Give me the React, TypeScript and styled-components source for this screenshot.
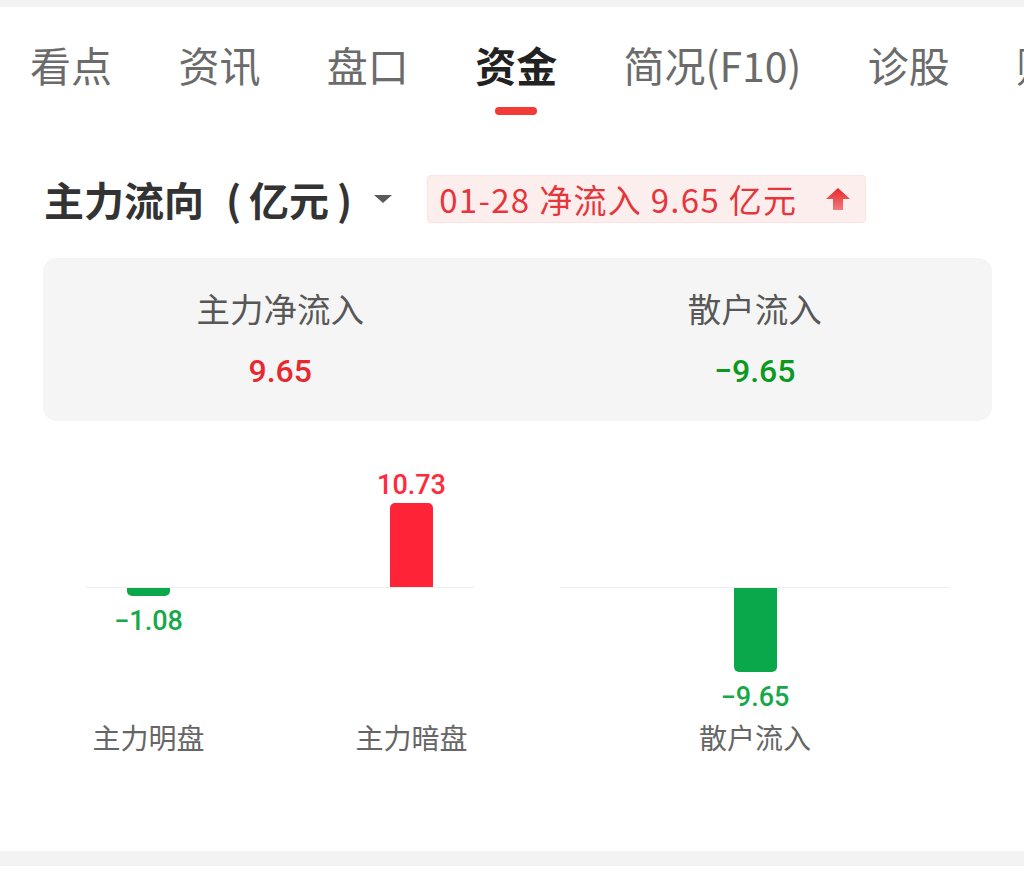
import React from "react";
import styled, { createGlobalStyle } from "styled-components";

const GlobalStyle = createGlobalStyle`
  html, body { margin: 0; padding: 0; background: #ffffff; }
  body {
    font-family: "Noto Sans CJK SC", "Noto Sans", sans-serif;
    width: 1024px;
    height: 875px;
    overflow: hidden;
  }
  * { box-sizing: border-box; }
`;

const Page = styled.div`
  width: 1024px;
  height: 875px;
  display: flex;
  flex-direction: column;
  background: #ffffff;
  overflow: hidden;
`;

const GrayStrip = styled.div<{ $h: number }>`
  height: ${(p) => p.$h}px;
  flex: 0 0 auto;
  background: #f3f3f3;
`;

const BottomGap = styled.div`
  height: 9px;
  flex: 0 0 auto;
`;

const TabBar = styled.nav`
  display: flex;
  gap: 66.4px;
  padding: 32px 0 0 30px;
  white-space: nowrap;
  overflow: hidden;
`;

const Tab = styled.div`
  display: flex;
  flex-direction: column;
  align-items: center;
  flex: 0 0 auto;
`;

const TabLabel = styled.span<{ $active?: boolean }>`
  font-size: 41px;
  line-height: 50px;
  color: ${(p) => (p.$active ? "#222222" : "#6b6b6b")};
  font-weight: ${(p) => (p.$active ? 700 : 400)};
`;

const Indicator = styled.div<{ $active?: boolean }>`
  margin-top: 18px;
  width: 42px;
  height: 8px;
  border-radius: 4px;
  background: ${(p) => (p.$active ? "#f23a36" : "transparent")};
`;

const TitleRow = styled.div`
  display: flex;
  align-items: center;
  height: 48px;
  margin-top: 60px;
  padding-left: 44px;
`;

const Title = styled.h2`
  margin: 0;
  font-size: 40px;
  line-height: 48px;
  font-weight: 700;
  color: #333333;
  display: flex;
`;

const TitleUnit = styled.span`
  margin-left: 22px;
`;

const Caret = styled.span`
  width: 0;
  height: 0;
  margin-left: 22px;
  border-left: 9px solid transparent;
  border-right: 9px solid transparent;
  border-top: 8px solid #5a5a5a;
`;

const Badge = styled.div`
  margin-left: 35px;
  height: 48px;
  width: 439px;
  display: flex;
  align-items: center;
  justify-content: space-between;
  padding: 0 15px 0 11px;
  background: #fdeeee;
  border: 1px solid #fbe2e3;
  border-radius: 4px;
  color: #e6363b;
  font-size: 33px;
  letter-spacing: 1.3px;
  line-height: 48px;
  white-space: nowrap;
`;

const SummaryCard = styled.section`
  margin: 35px 32px 0 43px;
  height: 163px;
  background: #f5f5f5;
  border-radius: 14px;
  display: grid;
  grid-template-columns: 1fr 1fr;
  padding: 30px 0 0;
`;

const SummaryCell = styled.div`
  display: flex;
  flex-direction: column;
  align-items: center;
`;

const SummaryLabel = styled.div`
  font-size: 33.5px;
  line-height: 40px;
  color: #575757;
`;

const SummaryValue = styled.div<{ $tone: "up" | "down" }>`
  margin-top: 23px;
  font-family: "Roboto", "Noto Sans", sans-serif;
  font-weight: 500;
  font-size: 32px;
  line-height: 40px;
  color: ${(p) => (p.$tone === "up" ? "#e8282f" : "#0b9a1e")};
`;

const Chart = styled.div`
  display: flex;
  gap: 85px;
  margin-top: 40px;
  padding-left: 85px;
`;

const Group = styled.div<{ $cols: number }>`
  width: 390px;
  display: grid;
  grid-template-columns: ${(p) => (p.$cols > 1 ? `repeat(${p.$cols}, 127px)` : "1fr")};
  grid-template-rows: 126px 1px 128px auto;
  justify-content: space-between;
`;

const Axis = styled.div`
  grid-row: 2;
  grid-column: 1 / -1;
  background: #eeeeee;
`;

const UpZone = styled.div<{ $col: number }>`
  grid-row: 1;
  grid-column: ${(p) => p.$col};
  display: flex;
  flex-direction: column;
  justify-content: flex-end;
  align-items: center;
`;

const DownZone = styled.div<{ $col: number }>`
  grid-row: 3;
  grid-column: ${(p) => p.$col};
  display: flex;
  flex-direction: column;
  justify-content: flex-start;
  align-items: center;
`;

const Bar = styled.div<{ $tone: "up" | "down" }>`
  width: 43px;
  background: ${(p) => (p.$tone === "up" ? "#ff2337" : "#0aa84a")};
  border-radius: ${(p) => (p.$tone === "up" ? "5px 5px 0 0" : "0 0 5px 5px")};
`;

const BarValue = styled.div<{ $tone: "up" | "down" }>`
  font-family: "Roboto", "Noto Sans", sans-serif;
  font-weight: 500;
  font-size: 27px;
  line-height: 28px;
  color: ${(p) => (p.$tone === "up" ? "#ff2a3b" : "#17a84a")};
  margin: ${(p) => (p.$tone === "up" ? "0 0 4px" : "11px 0 0")};
`;

const Category = styled.div<{ $col: number }>`
  grid-row: 4;
  grid-column: ${(p) => p.$col};
  margin-top: 4px;
  text-align: center;
  font-size: 28px;
  line-height: 34px;
  color: #666666;
  white-space: nowrap;
`;

const Spacer = styled.div`
  flex: 1 1 auto;
`;

const UpArrow = () => (
  <svg width="24" height="22" viewBox="0 0 24 22">
    <defs>
      <linearGradient id="ag" x1="0" y1="0" x2="0" y2="1">
        <stop offset="0" stopColor="#e8262c" />
        <stop offset="1" stopColor="#f07a7e" />
      </linearGradient>
    </defs>
    <path d="M12 0 L24 11 L17 11 L17 22 L7 22 L7 11 L0 11 Z" fill="url(#ag)" />
  </svg>
);

type Item = { name: string; value: number };

const MAX_BAR = 84;

const BarGroup = ({ items }: { items: Item[] }) => {
  const max = Math.max(...items.map((i) => Math.abs(i.value)));
  return (
    <Group $cols={items.length}>
      {items.map((it, i) => {
        const h = Math.round((Math.abs(it.value) / max) * MAX_BAR);
        const up = it.value >= 0;
        const label = up ? it.value.toFixed(2) : `\u2212${Math.abs(it.value).toFixed(2)}`;
        return (
          <React.Fragment key={it.name}>
            <UpZone $col={i + 1}>
              {up && (
                <>
                  <BarValue $tone="up">{label}</BarValue>
                  <Bar $tone="up" style={{ height: h }} />
                </>
              )}
            </UpZone>
            <DownZone $col={i + 1}>
              {!up && (
                <>
                  <Bar $tone="down" style={{ height: h }} />
                  <BarValue $tone="down">{label}</BarValue>
                </>
              )}
            </DownZone>
            <Category $col={i + 1}>{it.name}</Category>
          </React.Fragment>
        );
      })}
      <Axis />
    </Group>
  );
};

const tabs = ["看点", "资讯", "盘口", "资金", "简况(F10)", "诊股", "财务"];

export default function App() {
  return (
    <>
      <GlobalStyle />
      <Page>
        <GrayStrip $h={7} />
        <TabBar>
          {tabs.map((t) => (
            <Tab key={t}>
              <TabLabel $active={t === "资金"}>{t}</TabLabel>
              <Indicator $active={t === "资金"} />
            </Tab>
          ))}
        </TabBar>
        <TitleRow>
          <Title>
            主力流向<TitleUnit>(&#8201;亿元&#8201;)</TitleUnit>
          </Title>
          <Caret />
          <Badge>
            <span>01-28 净流入 9.65 亿元</span>
            <UpArrow />
          </Badge>
        </TitleRow>
        <SummaryCard>
          <SummaryCell>
            <SummaryLabel>主力净流入</SummaryLabel>
            <SummaryValue $tone="up">9.65</SummaryValue>
          </SummaryCell>
          <SummaryCell>
            <SummaryLabel>散户流入</SummaryLabel>
            <SummaryValue $tone="down">&minus;9.65</SummaryValue>
          </SummaryCell>
        </SummaryCard>
        <Chart>
          <BarGroup
            items={[
              { name: "主力明盘", value: -1.08 },
              { name: "主力暗盘", value: 10.73 },
            ]}
          />
          <BarGroup items={[{ name: "散户流入", value: -9.65 }]} />
        </Chart>
        <Spacer />
        <GrayStrip $h={15} />
        <BottomGap />
      </Page>
    </>
  );
}
